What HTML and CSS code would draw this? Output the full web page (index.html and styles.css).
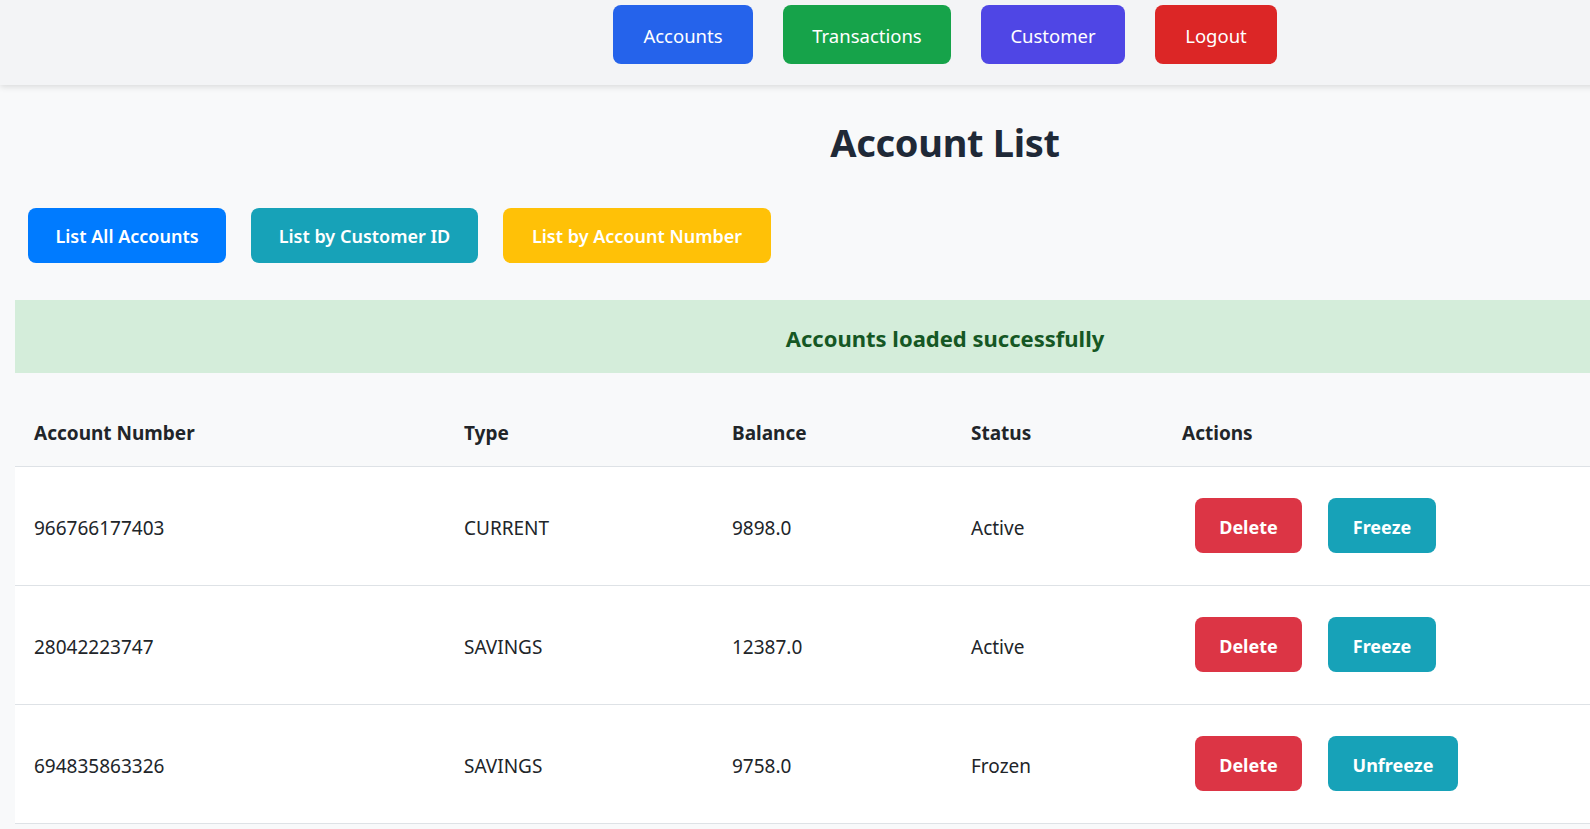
FILE: index.html
```html
<!DOCTYPE html>
<html lang="en">
<head>
<meta charset="utf-8">
<title>Account List</title>
<link rel="stylesheet" href="styles.css">
</head>
<body>
<div class="page">
  <nav class="navbar">
    <button class="nav-btn nav-accounts">Accounts</button>
    <button class="nav-btn nav-transactions">Transactions</button>
    <button class="nav-btn nav-customer">Customer</button>
    <button class="nav-btn nav-logout">Logout</button>
  </nav>
  <main class="main">
    <h1 class="title">Account List</h1>
    <div class="filters">
      <button class="filter-btn f-all">List All Accounts</button>
      <button class="filter-btn f-cust">List by Customer ID</button>
      <button class="filter-btn f-num">List by Account Number</button>
    </div>
    <div class="alert">Accounts loaded successfully</div>
    <table class="accounts">
      <thead>
        <tr>
          <th class="c1">Account Number</th>
          <th class="c2">Type</th>
          <th class="c3">Balance</th>
          <th class="c4">Status</th>
          <th class="c5">Actions</th>
          <th class="c6"></th>
        </tr>
      </thead>
      <tbody>
        <tr>
          <td>966766177403</td>
          <td>CURRENT</td>
          <td>9898.0</td>
          <td>Active</td>
          <td class="actions" colspan="2"><button class="act-btn del">Delete</button><button class="act-btn frz">Freeze</button></td>
        </tr>
        <tr>
          <td>28042223747</td>
          <td>SAVINGS</td>
          <td>12387.0</td>
          <td>Active</td>
          <td class="actions" colspan="2"><button class="act-btn del">Delete</button><button class="act-btn frz">Freeze</button></td>
        </tr>
        <tr>
          <td>694835863326</td>
          <td>SAVINGS</td>
          <td>9758.0</td>
          <td>Frozen</td>
          <td class="actions" colspan="2"><button class="act-btn del">Delete</button><button class="act-btn unfrz">Unfreeze</button></td>
        </tr>
      </tbody>
    </table>
  </main>
</div>
</body>
</html>
```
FILE: styles.css
```css
* { box-sizing: border-box; }
html, body { margin: 0; padding: 0; }
body {
  background: #f8f9fa;
  font-family: "Segoe UI", "Noto Sans", "Open Sans", sans-serif;
  color: #212529;
  overflow: hidden;
}
.page { width: 1890px; }
.navbar {
  height: 85px;
  background: #f3f4f6;
  box-shadow: 0 2px 6px rgba(0,0,0,0.12);
  display: flex;
  justify-content: center;
  align-items: flex-start;
  gap: 30px;
  padding-top: 5px;
  position: relative;
}
.nav-btn {
  height: 59px;
  border: none;
  border-radius: 8px;
  color: #fff;
  font-family: inherit;
  font-size: 18.5px;
  padding: 0;
  white-space: nowrap;
  line-height: 1;
  padding-top: 3px;
}
.nav-accounts { background: #2563eb; width: 140px; }
.nav-transactions { background: #16a34a; width: 168px; }
.nav-customer { background: #4f46e5; width: 144px; }
.nav-logout { background: #dc2626; width: 122px; }
.main { padding: 0 15px; }
.title {
  margin: 29px 0 0;
  text-align: center;
  font-size: 38px;
  line-height: 56px;
  font-weight: 700;
  color: #1f2937;
  letter-spacing: -0.3px;
}
.filters {
  display: flex;
  gap: 25px;
  padding-left: 13px;
  margin-top: 38px;
}
.filter-btn {
  height: 55px;
  border: none;
  border-radius: 8px;
  color: #fff;
  font-family: inherit;
  font-size: 18px;
  font-weight: 600;
  padding: 0;
  white-space: nowrap;
  line-height: 1;
}
.f-all { background: #007bff; width: 198px; }
.f-cust { background: #17a2b8; width: 227px; }
.f-num { background: #ffc107; width: 268px; }
.alert {
  margin-top: 37px;
  height: 73px;
  background: #d4edda;
  color: #155724;
  font-size: 22px;
  font-weight: 700;
  display: flex;
  align-items: center;
  justify-content: center;
  padding-top: 2px;
}
.accounts {
  width: 100%;
  margin-top: 27px;
  border-collapse: collapse;
  font-size: 19px;
}
.accounts th {
  text-align: left;
  font-weight: 700;
  height: 66px;
  padding: 0 19px;
  border-bottom: 1px solid #dee2e6;
  vertical-align: middle;
}
.accounts td {
  background: #fff;
  height: 119px;
  padding: 4px 19px 0;
  border-bottom: 1px solid #dee2e6;
  vertical-align: middle;
}
.c1 { width: 430px; }
.c2 { width: 268px; }
.c3 { width: 239px; }
.c4 { width: 211px; }
.c5 { width: 140px; }
.accounts td.actions { padding: 0 19px 0 32px; }
.act-btn {
  height: 55px;
  border: none;
  border-radius: 8px;
  color: #fff;
  font-family: inherit;
  font-size: 18px;
  font-weight: 700;
  padding: 3px 0 0;
  margin-right: 26px;
  vertical-align: middle;
  white-space: nowrap;
}
.del { background: #dc3545; width: 107px; }
.frz { background: #17a2b8; width: 108px; }
.unfrz { background: #17a2b8; width: 130px; }
```
